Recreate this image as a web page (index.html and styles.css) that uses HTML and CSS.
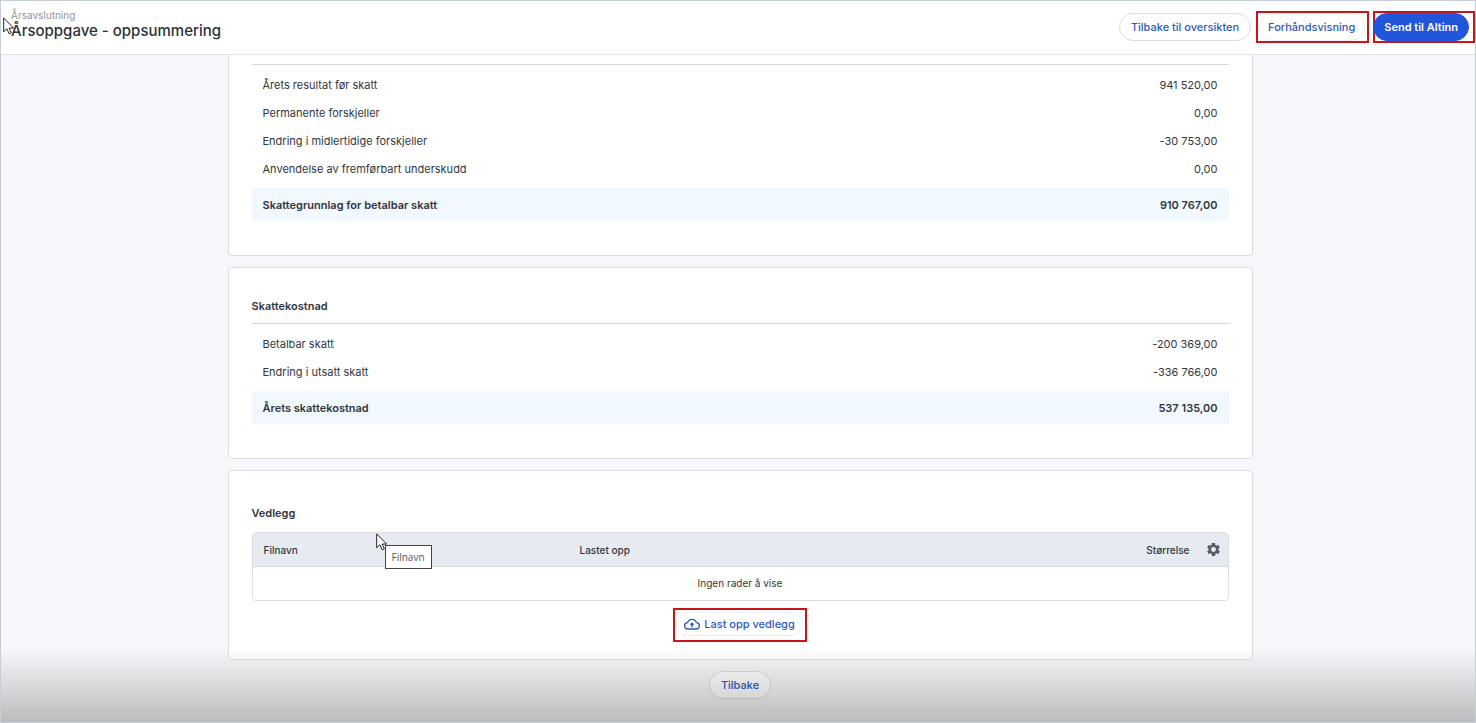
FILE: index.html
```html
<!DOCTYPE html>
<html lang="no">
<head>
<meta charset="utf-8">
<meta name="viewport" content="width=device-width, initial-scale=1">
<title>Årsoppgave - oppsummering</title>
<link rel="stylesheet" href="styles.css">
</head>
<body>
<div class="app">
  <header class="topbar">
    <div class="titles">
      <p class="crumb">Årsavslutning</p>
      <h1 class="title">Årsoppgave - oppsummering</h1>
    </div>
    <div class="actions">
      <button class="btn" type="button">Tilbake til oversikten</button>
      <div class="mark"><button class="btn btn-faint" type="button">Forhåndsvisning</button></div>
      <div class="mark mark-send"><button class="btn btn-primary" type="button">Send til Altinn</button></div>
    </div>
  </header>

  <main class="content">
    <section class="card card-first">
      <table class="sums">
        <tbody>
          <tr><th scope="row">Årets resultat før skatt</th><td>941 520,00</td></tr>
          <tr><th scope="row">Permanente forskjeller</th><td>0,00</td></tr>
          <tr><th scope="row">Endring i midlertidige forskjeller</th><td>-30 753,00</td></tr>
          <tr><th scope="row">Anvendelse av fremførbart underskudd</th><td>0,00</td></tr>
        </tbody>
        <tfoot>
          <tr><th scope="row">Skattegrunnlag for betalbar skatt</th><td>910 767,00</td></tr>
        </tfoot>
      </table>
    </section>

    <section class="card">
      <h2 class="heading">Skattekostnad</h2>
      <table class="sums">
        <tbody>
          <tr><th scope="row">Betalbar skatt</th><td>-200 369,00</td></tr>
          <tr><th scope="row">Endring i utsatt skatt</th><td>-336 766,00</td></tr>
        </tbody>
        <tfoot>
          <tr><th scope="row">Årets skattekostnad</th><td>537 135,00</td></tr>
        </tfoot>
      </table>
    </section>

    <section class="card card-files">
      <h2 class="heading">Vedlegg</h2>
      <div class="files-wrap">
        <table class="files">
          <thead>
            <tr>
              <th class="col-name" scope="col">Filnavn</th>
              <th class="col-date" scope="col">Lastet opp</th>
              <th class="col-size" scope="col">Størrelse</th>
              <th class="col-gear" scope="col">
                <button class="gear" type="button" aria-label="Innstillinger">
                  <svg viewBox="2 2 20 20" width="13" height="13" aria-hidden="true"><path fill="currentColor" fill-rule="evenodd" d="M19.4 13c0-.3.1-.6.1-1s0-.7-.1-1l2.1-1.600c.2-.2.2-.4.1-.6l-2-3.500c-.1-.2-.4-.3-.6-.2l-2.500 1c-.5-.4-1.100-.7-1.700-1l-.4-2.600c0-.3-.2-.5-.5-.5h-4c-.2 0-.5.2-.5.4l-.4 2.700c-.6.2-1.100.6-1.700 1L4.900 5.100c-.2-.1-.5 0-.6.2l-2 3.500c-.1.200-.1.500.1.600L4.500 11c0 .3-.1.700-.1 1s0 .7.100 1l-2.100 1.600c-.2.200-.2.400-.1.600l2 3.500c.1.200.4.300.6.200l2.500-1c.5.4 1.100.7 1.700 1l.4 2.600c0 .300.200.500.500.500h4c.3 0 .5-.2.500-.4l.4-2.700c.6-.2 1.100-.6 1.700-1l2.500 1c.2.100.5 0 .6-.2l2-3.500c.1-.2.100-.5-.1-.6L19.400 13zM12 15.800a3.800 3.800 0 1 1 0-7.600 3.800 3.800 0 0 1 0 7.600z"/></svg>
                </button>
              </th>
            </tr>
          </thead>
          <tbody>
            <tr><td class="empty" colspan="4">Ingen rader å vise</td></tr>
          </tbody>
        </table>
        <div class="hover">
          <svg class="pointer" viewBox="0 0 12 18" width="12" height="18" aria-hidden="true"><path d="M.7.9v13.900l3.200-3 2.200 5 2.200-1-2.200-4.700h4.500z" fill="#fff" stroke="#222" stroke-width="1"/></svg>
          <span class="tip" role="tooltip">Filnavn</span>
        </div>
      </div>
      <div class="mark mark-upload">
        <button class="btn btn-faint btn-upload" type="button">
          <svg viewBox="0 0 16 12" width="16" height="12" fill="none" stroke="currentColor" stroke-width="1.300" stroke-linejoin="round" aria-hidden="true"><path d="M4 11a3.200 3.200 0 0 1-.4-6.400 4.600 4.600 0 0 1 8.800 0A3.200 3.200 0 0 1 12 11z"/><path d="M7.200 9.200V6.800H5.500L8 4.300l2.500 2.500H8.800v2.400z" fill="currentColor" stroke="none"/></svg>
          Last opp vedlegg
        </button>
      </div>
    </section>

    <button class="btn btn-back" type="button">Tilbake</button>
  </main>

  <div class="shade"></div>
  <svg class="pointer pointer-top" viewBox="0 0 12 18" width="12" height="18" aria-hidden="true"><path d="M.7.9v13.900l3.200-3 2.200 5 2.200-1-2.200-4.700h4.500z" fill="#fff" stroke="#222" stroke-width="1"/></svg>
</div>
</body>
</html>
```
FILE: styles.css
```css
* {
  box-sizing: border-box;
}

body {
  margin: 0;
  font: 11px/16px Inter, "Liberation Sans", sans-serif;
  color: #32373d;
}

.app {
  position: relative;
  display: flex;
  flex-direction: column;
  min-height: 100vh;
  border: 1px solid #c6ced6;
  background: #f6f7fa;
}

.topbar {
  display: flex;
  justify-content: space-between;
  align-items: flex-start;
  padding: 8px 0 11px 10px;
  background: #fff;
  border-bottom: 1px solid #dfe2e6;
}

.crumb {
  margin: 0;
  font-size: 10px;
  line-height: 12px;
  color: #8f959d;
}

.title {
  margin: 0;
  font-size: 15px;
  line-height: 20px;
  font-weight: 500;
  color: #2c3137;
}

.actions {
  display: flex;
  align-items: center;
  gap: 4px;
  margin-top: 2px;
}

.btn {
  display: flex;
  align-items: center;
  height: 28px;
  padding: 0 11px;
  border: 1px solid #d9dce3;
  border-radius: 14px;
  background: #fff;
  font: 500 11px/16px Inter, "Liberation Sans", sans-serif;
  white-space: nowrap;
  color: #2f58bd;
}

.btn-faint {
  padding: 0 9px;
  border-color: #eceef2;
}

.btn-primary {
  padding: 0 10px;
  border-color: #2156dc;
  background: #2156dc;
  color: #fff;
  font-weight: 600;
}

.mark {
  display: flex;
  border: 2px solid #c8141a;
}

.actions .mark {
  padding-right: 2px;
}

.actions .mark:not(.mark-send) {
  margin-left: 1px;
}

.actions .mark-send {
  padding-right: 4px;
}

.mark-send .btn {
  margin-left: -2px;
}

.content {
  display: flex;
  flex-direction: column;
  align-items: center;
  gap: 11px;
  padding: 0 16px 23px 20px;
}

.card {
  width: 100%;
  max-width: 1025px;
  padding: 30px 23px 34px;
  border: 1px solid #dadde2;
  border-radius: 4px;
  background: #fff;
}

.card-first {
  padding-top: 9px;
  border-top: 0;
  border-radius: 0 0 4px 4px;
}

.card-files {
  padding: 34px 23px 17px;
}

.heading {
  margin: 0 0 9px;
  font-size: 11px;
  line-height: 16px;
  font-weight: 600;
}

.sums {
  width: 100%;
  border-top: 1px solid #d3d6da;
  border-spacing: 0;
}

.sums th,
.sums td {
  height: 28px;
  padding: 0 11px;
  font-weight: 400;
  text-align: left;
}

.sums td {
  text-align: right;
}

.sums tbody::before,
.sums tbody::after {
  content: "";
  display: table-row;
  height: 6px;
}

.sums tbody::after {
  height: 5px;
}

.sums tfoot th,
.sums tfoot td {
  height: 33px;
  background: #f1f8fe;
  font-weight: 600;
}

.files-wrap {
  position: relative;
  margin-top: 11px;
  border: 1px solid #d9dde2;
  border-radius: 4px;
}

.files {
  width: 100%;
  table-layout: fixed;
  border-spacing: 0;
  font-size: 10px;
}

.files th {
  height: 34px;
  padding: 0 11px;
  border-bottom: 1px solid #d5dbe3;
  background: #e6ebf2;
  font-weight: 500;
  text-align: left;
}

.files .col-name {
  width: 316px;
}

.files .col-size {
  padding-right: 10px;
  text-align: right;
}

.files .col-gear {
  width: 28px;
  padding: 0;
}

.gear {
  display: flex;
  padding: 0 7px;
  border: 0;
  background: none;
  color: #555b63;
}

.empty {
  height: 33px;
  padding: 0 0 2px;
  text-align: center;
}

.hover {
  position: absolute;
  top: 0;
  left: 123px;
}

.pointer {
  display: block;
}

.tip {
  position: absolute;
  top: 12px;
  left: 9px;
  padding: 1px 6px;
  border: 1px solid #444;
  background: #fff;
  font: 10px/20px "Open Sans", "Noto Sans", sans-serif;
  color: #555;
}

.mark-upload {
  width: fit-content;
  margin: 7px auto 0;
  padding: 2px 2px 4px 1px;
}

.btn-upload {
  height: 24px;
  gap: 4px;
  padding: 0 7px;
}

.btn-back {
  padding: 0 11px;
}

.shade {
  position: absolute;
  inset: auto 0 0;
  height: 74px;
  background: linear-gradient(rgba(0, 0, 0, 0), rgba(0, 0, 0, 0.24));
  pointer-events: none;
}

.pointer-top {
  position: absolute;
  top: 16px;
  left: 2px;
}
```
